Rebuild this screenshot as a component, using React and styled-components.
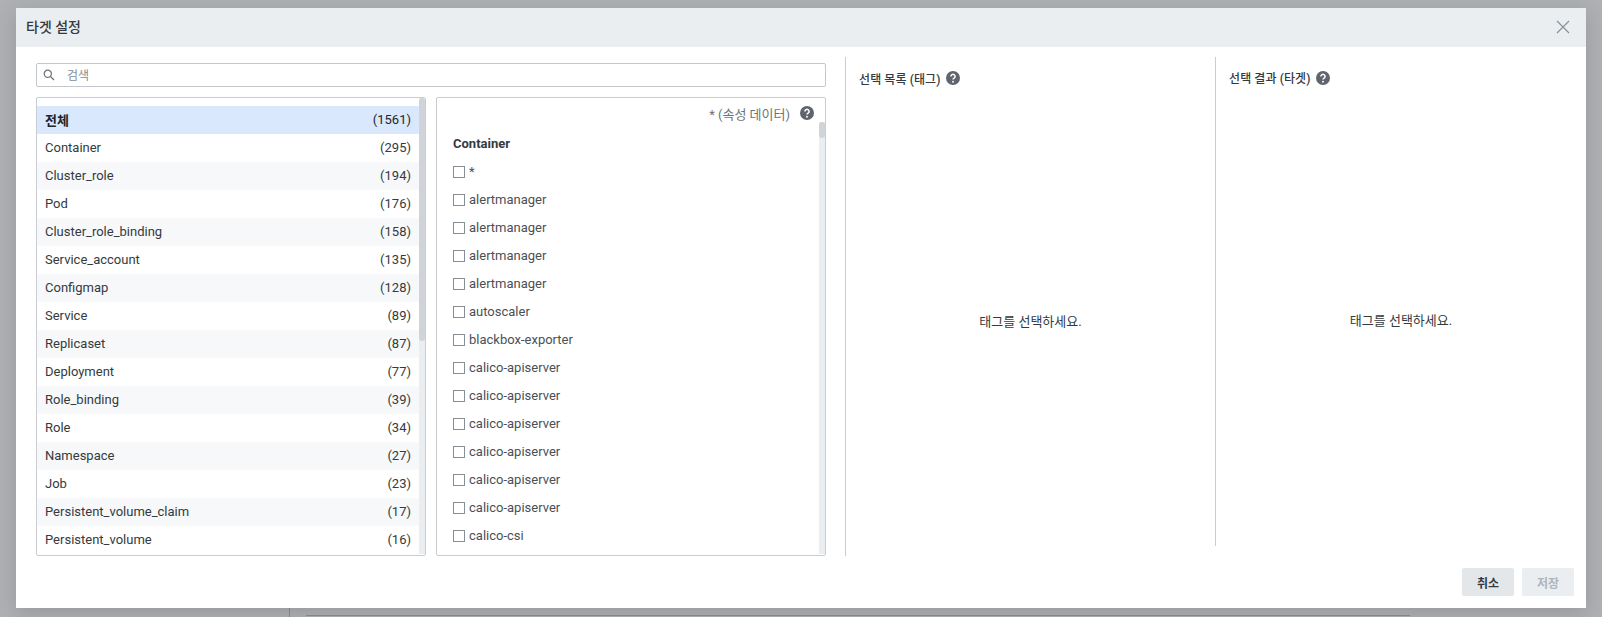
import styled, { createGlobalStyle } from 'styled-components';

const GlobalStyle = createGlobalStyle`
  html, body {
    margin: 0;
    padding: 0;
    height: 100%;
    overflow: hidden;
  }
  body {
    font-family: Roboto, "Noto Sans CJK KR", sans-serif;
    font-size: 13px;
    color: #343a40;
  }
`;

const Backdrop = styled.div`
  position: relative;
  width: 1602px;
  height: 617px;
  box-sizing: border-box;
  padding: 8px 16px 9px;
  background: #afb0b3;
`;
const PageLine = styled.div`
  position: absolute;
  top: 608px;
  left: 289px;
  width: 1px;
  height: 9px;
  background: #8b8d91;
`;
const PageRule = styled.div`
  position: absolute;
  top: 615px;
  left: 306px;
  width: 1104px;
  height: 1px;
  background: #8b8d91;
`;
const Modal = styled.div`
  position: relative;
  height: 600px;
  display: flex;
  flex-direction: column;
  background: #fff;
  box-shadow: 0 5px 20px rgba(0,0,0,0.14);
`;
const Header = styled.div`
  height: 39px;
  flex: none;
  display: flex;
  align-items: center;
  justify-content: space-between;
  padding: 0 16px 0 10px;
  background: #ebeef1;
`;
const Title = styled.h1`
  margin: 0;
  padding-bottom: 3px;
  font-size: 14px;
  font-weight: 500;
  color: #343a40;
`;
const CloseButton = styled.button`
  display: flex;
  border: 0;
  padding: 0 0 1px;
  background: none;
  color: #868e96;
`;
const Body = styled.div`
  flex: 1;
  min-height: 0;
  display: grid;
  grid-template-columns: 829px 370px 371px;
  padding-top: 10px;
`;
const Picker = styled.div`
  display: flex;
  flex-direction: column;
  gap: 10px;
  padding: 6px 19px 0 20px;
  height: 493px;
`;
const SearchBox = styled.div`
  height: 24px;
  box-sizing: border-box;
  flex: none;
  display: flex;
  align-items: center;
  gap: 12px;
  padding-left: 6px;
  border: 1px solid #c3c7cc;
  border-radius: 2px;
  color: #868e96;
  font-size: 12px;
`;
const SearchLabel = styled.span`
  padding-bottom: 2px;
`;
const Lists = styled.div`
  flex: 1;
  min-height: 0;
  display: grid;
  grid-template-columns: 390px 390px;
  gap: 10px;
`;
const Panel = styled.div`
  position: relative;
  overflow: hidden;
  box-sizing: border-box;
  border: 1px solid #c9ccd1;
  border-radius: 2px;
`;
const CategoryList = styled.ul`
  list-style: none;
  margin: 0;
  padding: 8px 6px 0 0;
`;
const CategoryRow = styled.li`
  height: 28px;
  box-sizing: border-box;
  display: flex;
  align-items: center;
  justify-content: space-between;
  padding: 0 8px 2px 8px;
  background: ${props => props.$active ? '#d9e8fd' : props.$alt ? '#f6f8fa' : '#fff'};
  font-weight: ${props => props.$active ? 700 : 400};
  color: ${props => props.$active ? '#212529' : '#343a40'};
`;
const Count = styled.span`
  font-weight: 400;
`;
const ScrollTrack = styled.div`
  position: absolute;
  top: ${props => props.$top}px;
  right: 0;
  bottom: 1px;
  width: 6px;
  background: #ebeef1;
`;
const ScrollThumb = styled.div`
  height: ${props => props.$height}px;
  border-radius: 3px;
  background: #d0d3d7;
`;
const AttrHeader = styled.div`
  display: flex;
  justify-content: flex-end;
  align-items: center;
  gap: 10px;
  height: 30px;
  padding: 0 11px 0 0;
  box-sizing: border-box;
  color: #6c737a;
`;
const GroupName = styled.div`
  height: 30px;
  padding: 1px 0 0 16px;
  box-sizing: border-box;
  display: flex;
  align-items: center;
  font-weight: 700;
  color: #343a40;
`;
const CheckRow = styled.label`
  height: 28px;
  display: flex;
  align-items: center;
  gap: 4px;
  padding-left: 16px;
  color: #495057;
`;
const CheckBox = styled.span`
  width: 10px;
  height: 10px;
  border: 1px solid #868e96;
  flex: none;
`;
const CheckLabel = styled.span`
  padding-bottom: 2px;
`;
const Column = styled.section`
  display: flex;
  flex-direction: column;
  height: ${props => props.$height}px;
  box-sizing: border-box;
  border-left: 1px solid #c9ccd1;
  padding: 12px 0 0 13px;
`;
const ColumnTitle = styled.h2`
  margin: 0;
  display: flex;
  align-items: center;
  gap: 5px;
  height: 18px;
  font-size: 12px;
  font-weight: 500;
  letter-spacing: 0.1px;
  color: #343a40;
`;
const Empty = styled.div`
  height: 466px;
  flex: none;
  display: flex;
  align-items: center;
  justify-content: center;
  padding-right: 13px;
  color: #343a40;
`;
const Footer = styled.div`
  flex: none;
  display: flex;
  justify-content: flex-end;
  gap: 8px;
  padding: 0 12px 12px 0;
`;
const Button = styled.button`
  width: 52px;
  height: 28px;
  border: 0;
  border-radius: 2px;
  font-family: inherit;
  font-size: 12px;
  font-weight: 700;
  background: ${props => props.disabled ? '#ebeef1' : '#e4e7ea'};
  color: ${props => props.disabled ? '#adb5bd' : '#343a40'};
`;

const categories = [
  ['Container', 295], ['Cluster_role', 194], ['Pod', 176], ['Cluster_role_binding', 158],
  ['Service_account', 135], ['Configmap', 128], ['Service', 89], ['Replicaset', 87],
  ['Deployment', 77], ['Role_binding', 39], ['Role', 34], ['Namespace', 27],
  ['Job', 23], ['Persistent_volume_claim', 17], ['Persistent_volume', 16],
];

const containers = [
  '*', 'alertmanager', 'alertmanager', 'alertmanager', 'alertmanager', 'autoscaler',
  'blackbox-exporter', 'calico-apiserver', 'calico-apiserver', 'calico-apiserver',
  'calico-apiserver', 'calico-apiserver', 'calico-apiserver', 'calico-csi',
];

function HelpIcon() {
  return (
    <svg width="14" height="14" viewBox="0 0 14 14">
      <circle cx="7" cy="7" r="7" fill="#5f646e" />
      <path d="M4.9 5.4a2.1 2 0 1 1 3.2 1.7c-.7.4-1.1.8-1.1 1.5" fill="none" stroke="#fff" strokeWidth="1.5" />
      <circle cx="7" cy="10.7" r="0.95" fill="#fff" />
    </svg>
  );
}

function SearchIcon() {
  return (
    <svg width="12" height="12" viewBox="0 0 12 12" fill="none" stroke="#6c737a" strokeWidth="1.2">
      <circle cx="4.8" cy="4.8" r="3.6" />
      <path d="M7.5 7.5 11 11" />
    </svg>
  );
}

function CloseIcon() {
  return (
    <svg width="14" height="14" viewBox="0 0 14 14" stroke="currentColor" strokeWidth="1.1">
      <path d="M1 1l12 12M13 1 1 13" />
    </svg>
  );
}

export default function App() {
  return (
    <Backdrop>
      <GlobalStyle />
      <PageLine />
      <PageRule />
      <Modal>
        <Header>
          <Title>타겟 설정</Title>
          <CloseButton><CloseIcon /></CloseButton>
        </Header>
        <Body>
          <Picker>
            <SearchBox>
              <SearchIcon />
              <SearchLabel>검색</SearchLabel>
            </SearchBox>
            <Lists>
              <Panel>
                <CategoryList>
                  <CategoryRow $active>
                    전체
                    <Count>(1561)</Count>
                  </CategoryRow>
                  {categories.map(([name, count], i) => (
                    <CategoryRow key={name} $alt={i % 2 === 1}>
                      {name}
                      <Count>({count})</Count>
                    </CategoryRow>
                  ))}
                </CategoryList>
                <ScrollTrack $top={0}>
                  <ScrollThumb $height={243} />
                </ScrollTrack>
              </Panel>
              <Panel>
                <AttrHeader>
                  * (속성 데이터)
                  <HelpIcon />
                </AttrHeader>
                <GroupName>Container</GroupName>
                {containers.map((name, i) => (
                  <CheckRow key={i}>
                    <CheckBox />
                    <CheckLabel>{name}</CheckLabel>
                  </CheckRow>
                ))}
                <ScrollTrack $top={24}>
                  <ScrollThumb $height={16} />
                </ScrollTrack>
              </Panel>
            </Lists>
          </Picker>
          <Column $height={499}>
            <ColumnTitle>
              선택 목록 (태그)
              <HelpIcon />
            </ColumnTitle>
            <Empty>태그를 선택하세요.</Empty>
          </Column>
          <Column $height={489}>
            <ColumnTitle>
              선택 결과 (타겟)
              <HelpIcon />
            </ColumnTitle>
            <Empty>태그를 선택하세요.</Empty>
          </Column>
        </Body>
        <Footer>
          <Button>취소</Button>
          <Button disabled>저장</Button>
        </Footer>
      </Modal>
    </Backdrop>
  );
}
